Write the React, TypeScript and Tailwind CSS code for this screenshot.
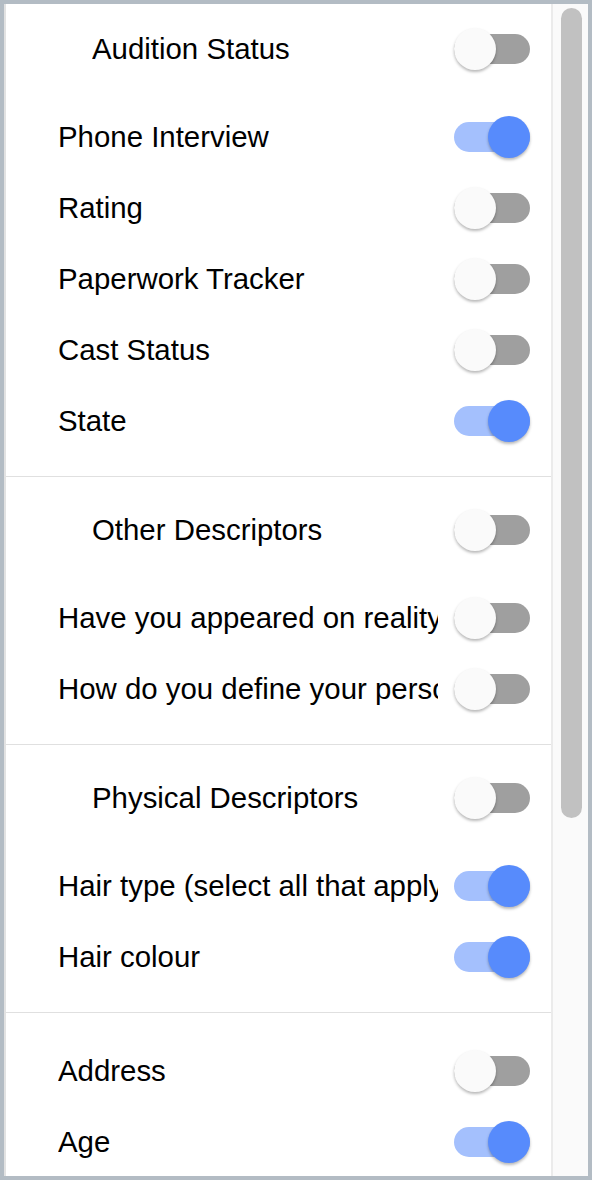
import React from "react";

type Item = { label: string; on: boolean };
type Section = { title?: string; items: Item[]; first?: boolean; last?: boolean };

const sections: Section[] = [
  {
    title: "Audition Status",
    first: true,
    items: [
      { label: "Phone Interview", on: true },
      { label: "Rating", on: false },
      { label: "Paperwork Tracker", on: false },
      { label: "Cast Status", on: false },
      { label: "State", on: true },
    ],
  },
  {
    title: "Other Descriptors",
    items: [
      { label: "Have you appeared on reality TV before?", on: false },
      { label: "How do you define your personality?", on: false },
    ],
  },
  {
    title: "Physical Descriptors",
    items: [
      { label: "Hair type (select all that apply)", on: true },
      { label: "Hair colour", on: true },
    ],
  },
  {
    last: true,
    items: [
      { label: "Address", on: false },
      { label: "Age", on: true },
    ],
  },
];

function Toggle({ on }: { on: boolean }) {
  return (
    <div className="relative w-[76px] h-[42px] shrink-0 flex items-center">
      <div
        className={
          on
            ? "w-[76px] h-[30px] rounded-full bg-[#a4c0fd]"
            : "w-[76px] h-[30px] rounded-full bg-[#9f9f9f]"
        }
      />
      <div
        className={
          on
            ? "absolute right-0 top-0 w-[42px] h-[42px] rounded-full bg-[#578bfc] shadow-[0_2px_3px_rgba(0,0,0,0.28)]"
            : "absolute left-0 top-0 w-[42px] h-[42px] rounded-full bg-[#fafafa] shadow-[0_2px_3px_rgba(0,0,0,0.28)]"
        }
      />
    </div>
  );
}

function Row({ label, on, header }: { label: string; on: boolean; header?: boolean }) {
  return (
    <div
      className={
        header
          ? "flex items-center h-[72px] pl-[86px] pr-[21px]"
          : "flex items-center h-[71px] pl-[52px] pr-[21px]"
      }
    >
      <div className="flex-1 min-w-0 overflow-hidden whitespace-nowrap mr-[16px] text-[29.4px] leading-[38px] text-black">
        {label}
      </div>
      <Toggle on={on} />
    </div>
  );
}

export default function App() {
  return (
    <div
      className="w-[592px] h-[1180px] border-4 border-[#b3bcc4] flex bg-white overflow-hidden"
      style={{ fontFamily: '"Liberation Sans", Arial, Helvetica, sans-serif' }}
    >
      <div className="flex-1 min-w-0 border-l-2 border-[#e2e2e2] overflow-hidden">
        {sections.map((s, i) => (
          <div
            key={i}
            className={
              s.first
                ? "pt-[9px] pb-[20px] border-b border-[#e0e0e0]"
                : s.last
                ? "pt-[22px] pb-[20px]"
                : "pt-[17px] pb-[20px] border-b border-[#e0e0e0]"
            }
          >
            {s.title && (
              <div className="mb-[16px]">
                <Row label={s.title} on={false} header />
              </div>
            )}
            {s.items.map((it, j) => (
              <Row key={j} label={it.label} on={it.on} />
            ))}
          </div>
        ))}
      </div>
      <div className="w-[37px] shrink-0 bg-[#fafafa] border-l-2 border-[#ebebeb]">
        <div className="mt-[4px] ml-[8px] w-[21px] h-[810px] rounded-full bg-[#c1c1c1]" />
      </div>
    </div>
  );
}
